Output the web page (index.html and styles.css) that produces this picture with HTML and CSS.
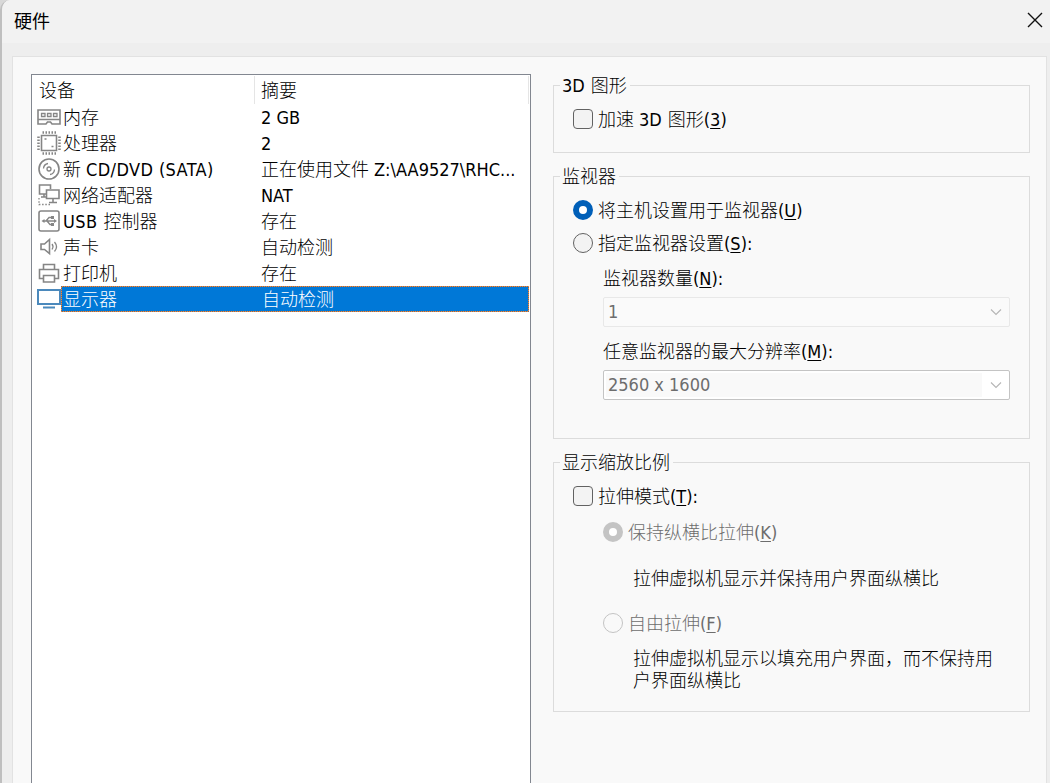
FILE: index.html
```html
<!DOCTYPE html>
<html lang="zh-CN">
<head>
<meta charset="utf-8">
<title>硬件</title>
<link rel="stylesheet" href="styles.css">
</head>
<body>
<div class="window">
  <header class="titlebar">
    <h1 class="title">硬件</h1>
    <svg class="close" width="16" height="16" viewBox="0 0 16 16"><path d="M1 1 15 15M15 1 1 15"/></svg>
  </header>
  <main class="panel">
    <div class="devices">
      <div class="head"><span class="name">设备</span><span class="info">摘要</span></div>
      <div class="row">
        <svg class="icon" viewBox="0 0 24 26"><path d="M1 6H23V20H15L13.500 18H10.500L9 20H1ZM1 15.500H23"/><path class="fine" d="M4.500 9.500H8V12.500H4.500ZM10.500 9.500H14V12.500H10.500ZM16.500 9.500H20V12.500H16.500Z"/></svg>
        <span class="name">内存</span><span class="info"><b>2 GB</b></span>
      </div>
      <div class="row">
        <svg class="icon" viewBox="0 0 24 26"><path d="M4.500 5.500H19.500V20.500H4.500Z"/><path class="pins" d="M5.500 2.500H19M5.500 23.500H19M1.500 6.500V20M22.500 6.500V20"/><path d="M7.500 9H9.500M14.500 16.500H16.500"/></svg>
        <span class="name">处理器</span><span class="info"><b>2</b></span>
      </div>
      <div class="row">
        <svg class="icon" viewBox="0 0 24 26"><circle cx="12" cy="13" r="10"/><circle class="fine" cx="12" cy="13" r="2"/><path class="fine" d="M6.500 12.500A5.500 5.500 0 0 1 11 7.500M17.500 13.500A5.500 5.500 0 0 1 13 18.500"/></svg>
        <span class="name">新<b class="gap wide">CD/DVD (SATA)</b></span><span class="info">正在使用文件<b class="gap">Z:\AA9527\RHC...</b></span>
      </div>
      <div class="row">
        <svg class="icon" viewBox="0 0 24 26"><path d="M9 12H2.500V3H13.500V7M7 12V15M4 15H10M9.500 8H22V16.500H9.500ZM16 17V20M12 20.500H20"/><path class="dots" d="M2 16V22.500H14"/></svg>
        <span class="name">网络适配器</span><span class="info"><b>NAT</b></span>
      </div>
      <div class="row">
        <svg class="icon" viewBox="0 0 24 26"><rect x="2" y="3" width="20" height="20" rx="2"/><path class="fine" d="M6 13H18M9 13 12 9.500H15M10 13 13 16.500H15"/><path class="solid" d="M7.500 11V15L4.500 13ZM17 11V15L20 13ZM14 8H17V11H14ZM14 15H17V18H14Z"/></svg>
        <span class="name"><b class="wide">USB</b><span class="after">控制器</span></span><span class="info">存在</span>
      </div>
      <div class="row">
        <svg class="icon" viewBox="0 0 24 26"><path d="M4 10H7.500L12.500 5.500V19.500L7.500 15.500H4Z"/><path class="fine" d="M15 10Q17 12.500 15 15.500M17.500 8Q21.500 12.700 17.500 17.500"/></svg>
        <span class="name">声卡</span><span class="info">自动检测</span>
      </div>
      <div class="row">
        <svg class="icon" viewBox="0 0 24 26"><path d="M6.500 9.500V4.500H17.500V9.500M6.500 18.500H2.500V9.500H21.500V18.500H17.500M6.500 15.500H17.500V22H6.500Z"/></svg>
        <span class="name">打印机</span><span class="info">存在</span>
      </div>
      <div class="row selected">
        <svg class="icon screen" viewBox="0 0 24 26"><path d="M1 4H23V18H1ZM6 21.500H18"/></svg>
        <div class="highlight"><span class="name">显示器</span><span class="info">自动检测</span></div>
      </div>
    </div>
    <div class="settings">
      <section class="group graphics">
        <h2 class="legend"><b>3D</b><span class="after">图形</span></h2>
        <label class="option"><i class="check"></i><span>加速<b class="gap">3D</b><span class="after">图形</span><b>(<u>3</u>)</b></span></label>
      </section>
      <section class="group monitors">
        <h2 class="legend">监视器</h2>
        <label class="option"><i class="radio on"></i><span>将主机设置用于监视器<b>(<u>U</u>)</b></span></label>
        <label class="option specify"><i class="radio"></i><span>指定监视器设置<b>(<u>S</u>):</b></span></label>
        <p class="field">监视器数量<b>(<u>N</u>):</b></p>
        <div class="select faint"><b>1</b><svg width="12" height="8" viewBox="0 0 12 8"><path d="M1 1.500 6 6.500 11 1.500"/></svg></div>
        <p class="field second">任意监视器的最大分辨率<b>(<u>M</u>):</b></p>
        <div class="select"><b>2560 x 1600</b><svg width="12" height="8" viewBox="0 0 12 8"><path d="M1 1.500 6 6.500 11 1.500"/></svg></div>
      </section>
      <section class="group scaling">
        <h2 class="legend">显示缩放比例</h2>
        <label class="option"><i class="check"></i><span>拉伸模式<b>(<u>T</u>):</b></span></label>
        <label class="option sub keep"><i class="radio on"></i><span>保持纵横比拉伸<b>(<u>K</u>)</b></span></label>
        <p class="note">拉伸虚拟机显示并保持用户界面纵横比</p>
        <label class="option sub free"><i class="radio"></i><span>自由拉伸<b>(<u>F</u>)</b></span></label>
        <p class="note last">拉伸虚拟机显示以填充用户界面，而不保持用户界面纵横比</p>
      </section>
    </div>
  </main>
</div>
</body>
</html>
```
FILE: styles.css
```css
* { box-sizing: border-box; }
body {
  margin: 0;
  height: 783px;
  overflow: hidden;
  background: #d8d8d8;
  color: #000;
  font: 300 18px/26px "Noto Sans CJK SC Light", "Noto Sans CJK SC", sans-serif;
}
h1, h2, p { margin: 0; font-weight: inherit; font-size: inherit; }
b { font: 400 18px/18px "DejaVu Sans Condensed", "DejaVu Sans", sans-serif; font-stretch: condensed; }
u { text-decoration-thickness: 1px; text-underline-offset: 2px; }
.wide { letter-spacing: 0.4px; }
.gap { margin-left: 5px; }
.after { margin-left: 6px; }
.window {
  height: 783px;
  display: flex;
  flex-direction: column;
  background: #eee;
  border-left: 2px solid #bfbfbf;
  border-top-left-radius: 10px;
  overflow: hidden;
}
.titlebar {
  height: 43px;
  flex: none;
  display: flex;
  justify-content: space-between;
  align-items: center;
  padding: 0 7px 3px 12px;
  background: #f2f2f2;
}
.title { font-weight: 400; font-family: "Noto Sans CJK SC", sans-serif; }
.close { fill: none; stroke: #111; stroke-width: 1.4; }
.panel {
  flex: none;
  height: 740px;
  margin: 13px 3px 0 10px;
  border: 1px solid #e2e2e2;
  background: #f9f9f9;
  display: flex;
  align-items: flex-start;
  padding: 17px 16px 0 18px;
}
.devices {
  width: 500px;
  height: 720px;
  flex: none;
  border: 1px solid #828790;
  background: #fff;
}
.head {
  display: flex;
  height: 29px;
  padding: 1px 1px 0 7px;
}
.head .name { width: 216px; border-right: 1px solid #e5e5e5; line-height: 27px; }
.head .info { flex: 1; padding-left: 6px; border-right: 1px solid #e5e5e5; line-height: 27px; }
.row { display: flex; height: 26px; padding-left: 5px; white-space: nowrap; line-height: 24px; }
.row .name { width: 200px; padding-left: 2px; }
.icon {
  width: 24px;
  height: 26px;
  flex: none;
  fill: none;
  stroke: #858585;
  stroke-width: 1.6;
}
.icon .fine { stroke-width: 1.3; }
.icon .pins { stroke-width: 2.5; stroke-dasharray: 1.5 1.5; }
.icon .dots { stroke-width: 1.3; stroke-dasharray: 1.5 1.7; }
.icon .solid { fill: #858585; stroke: none; }
.icon.screen { stroke: #4b89bc; stroke-width: 2; }
.highlight {
  width: 468px;
  display: flex;
  border: 1px solid transparent;
  background:
    linear-gradient(#0078d7, #0078d7) padding-box,
    repeating-conic-gradient(#ff8728 0 25%, #5f6f86 0 50%) 0 0 / 2px 2px border-box;
  color: #fff;
  line-height: 22px;
}
.highlight .name { padding-left: 1px; }
.settings { width: 477px; margin-left: 22px; padding-top: 11px; }
.group { position: relative; border: 1px solid #dcdcdc; padding: 0 19px; }
.graphics { height: 68px; padding-top: 23px; }
.monitors { height: 263px; margin-top: 23px; padding-top: 23px; }
.scaling { height: 250px; margin-top: 23px; padding-top: 23px; }
.legend {
  position: absolute;
  left: 6px;
  top: -15px;
  padding: 0 3px 0 2px;
  background: #f9f9f9;
}
.option { display: flex; height: 20px; gap: 5px; line-height: 18px; }
.check, .radio {
  width: 20px;
  height: 20px;
  flex: none;
  border: 1px solid #626262;
  background: #f3f3f3;
}
.check { border-radius: 4px; }
.radio { border-radius: 50%; }
.radio.on { border: 6px solid #005fb8; background: #fff; }
.specify { margin-top: 13px; }
.field { margin: 11px 0 0 30px; }
.field.second { margin-top: 10px; }
.select {
  display: flex;
  justify-content: space-between;
  align-items: center;
  width: 407px;
  height: 30px;
  margin: 7px 0 0 30px;
  padding: 0 7px 0 4px;
  border: 1px solid #c4c4c4;
  border-radius: 2px;
  color: #6d6d6d;
  background: linear-gradient(#f9f9f9, #f9f9f9) 2px 2px / 376px 24px no-repeat #fff;
}
.select.faint { border-color: #e8e8e8; background: #fafafa; }
.select svg { fill: none; stroke: #b5b5b5; stroke-width: 1.1; }
.sub { margin-left: 30px; color: #6d6d6d; }
.keep { margin-top: 16px; }
.free { margin-top: 25px; }
.sub .radio { border-color: #c4c4c4; background: #f9f9f9; }
.sub .on { background: #fff; }
.note { margin: 24px 0 0 60px; width: 362px; line-height: 22px; }
.note.last { margin-top: 13px; }
```
